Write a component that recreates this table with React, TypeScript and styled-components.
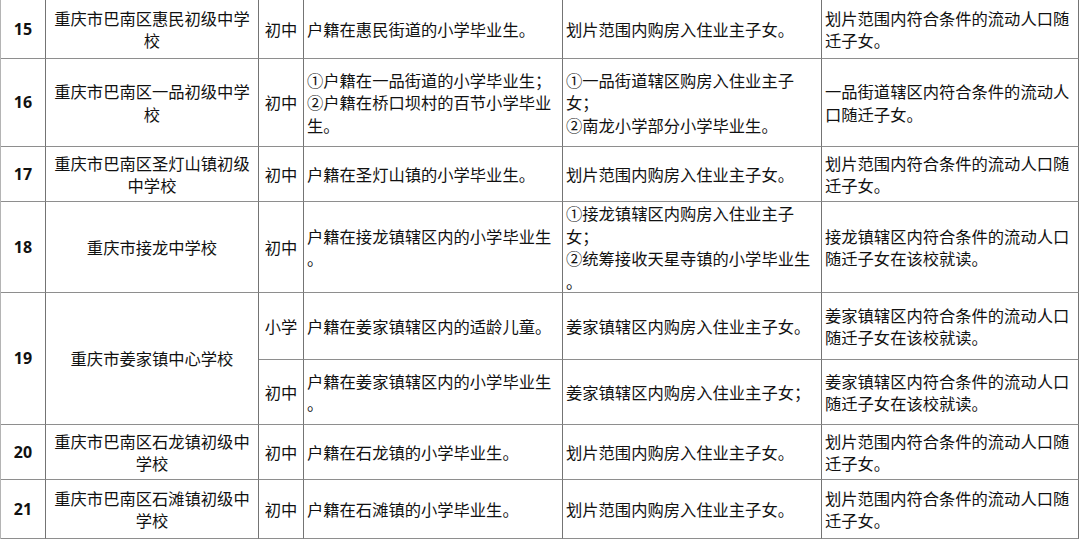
import React from "react";
import styled, { createGlobalStyle } from "styled-components";

const GlobalStyle = createGlobalStyle`
  html, body {
    margin: 0;
    padding: 0;
    background: #ffffff;
  }
`;

type Entry = {
  level: string;
  scope: string[];
  buy: string[];
  flow: string[];
};

type School = {
  no: string;
  name: string[];
  entries: Entry[];
};

const schools: School[] = [
  {
    no: "15",
    name: ["重庆市巴南区惠民初级中学", "校"],
    entries: [
      {
        level: "初中",
        scope: ["户籍在惠民街道的小学毕业生。"],
        buy: ["划片范围内购房入住业主子女。"],
        flow: ["划片范围内符合条件的流动人口随", "迁子女。"],
      },
    ],
  },
  {
    no: "16",
    name: ["重庆市巴南区一品初级中学", "校"],
    entries: [
      {
        level: "初中",
        scope: ["①户籍在一品街道的小学毕业生；", "②户籍在桥口坝村的百节小学毕业", "生。"],
        buy: ["①一品街道辖区购房入住业主子", "女；", "②南龙小学部分小学毕业生。"],
        flow: ["一品街道辖区内符合条件的流动人", "口随迁子女。"],
      },
    ],
  },
  {
    no: "17",
    name: ["重庆市巴南区圣灯山镇初级", "中学校"],
    entries: [
      {
        level: "初中",
        scope: ["户籍在圣灯山镇的小学毕业生。"],
        buy: ["划片范围内购房入住业主子女。"],
        flow: ["划片范围内符合条件的流动人口随", "迁子女。"],
      },
    ],
  },
  {
    no: "18",
    name: ["重庆市接龙中学校"],
    entries: [
      {
        level: "初中",
        scope: ["户籍在接龙镇辖区内的小学毕业生", "。"],
        buy: ["①接龙镇辖区内购房入住业主子", "女；", "②统筹接收天星寺镇的小学毕业生", "。"],
        flow: ["接龙镇辖区内符合条件的流动人口", "随迁子女在该校就读。"],
      },
    ],
  },
  {
    no: "19",
    name: ["重庆市姜家镇中心学校"],
    entries: [
      {
        level: "小学",
        scope: ["户籍在姜家镇辖区内的适龄儿童。"],
        buy: ["姜家镇辖区内购房入住业主子女。"],
        flow: ["姜家镇辖区内符合条件的流动人口", "随迁子女在该校就读。"],
      },
      {
        level: "初中",
        scope: ["户籍在姜家镇辖区内的小学毕业生", "。"],
        buy: ["姜家镇辖区内购房入住业主子女；"],
        flow: ["姜家镇辖区内符合条件的流动人口", "随迁子女在该校就读。"],
      },
    ],
  },
  {
    no: "20",
    name: ["重庆市巴南区石龙镇初级中", "学校"],
    entries: [
      {
        level: "初中",
        scope: ["户籍在石龙镇的小学毕业生。"],
        buy: ["划片范围内购房入住业主子女。"],
        flow: ["划片范围内符合条件的流动人口随", "迁子女。"],
      },
    ],
  },
  {
    no: "21",
    name: ["重庆市巴南区石滩镇初级中", "学校"],
    entries: [
      {
        level: "初中",
        scope: ["户籍在石滩镇的小学毕业生。"],
        buy: ["划片范围内购房入住业主子女。"],
        flow: ["划片范围内符合条件的流动人口随", "迁子女。"],
      },
    ],
  },
];

const Sheet = styled.div`
  display: grid;
  grid-template-columns: 45px 213px 45px 259px 259px 257px;
  grid-template-rows: 59px 88px 55px 91px 67px 65px 55px 59px;
  width: max-content;
  border-left: 1px solid #b4b4b4;
  background: #ffffff;
  color: #111111;
  font-family: "Noto Sans CJK SC", "Noto Sans", sans-serif;
  font-size: 16.3px;
  line-height: 22.5px;
`;

const Cell = styled.div<{ $align?: "center" | "left"; $rows?: number }>`
  box-sizing: border-box;
  display: flex;
  flex-direction: column;
  justify-content: center;
  align-items: ${(p) => (p.$align === "left" ? "flex-start" : "center")};
  padding: 0 ${(p) => (p.$align === "left" ? "3px" : "0")};
  grid-row: span ${(p) => p.$rows ?? 1};
  border-right: 1px solid #747474;
  border-bottom: 1px solid #8e8e8e;
  white-space: nowrap;
`;

const NumberCell = styled(Cell)`
  font-family: "Open Sans", "Noto Sans", sans-serif;
  font-weight: 700;
  font-size: 16px;
`;

const Line = styled.span`
  display: block;
`;

const Lines: React.FC<{ lines: string[] }> = ({ lines }) => (
  <>
    {lines.map((l, i) => (
      <Line key={i}>{l}</Line>
    ))}
  </>
);

const App: React.FC = () => {
  return (
    <>
      <GlobalStyle />
      <Sheet>
        {schools.map((s) => (
          <React.Fragment key={s.no}>
            <NumberCell $rows={s.entries.length}>{s.no}</NumberCell>
            <Cell $rows={s.entries.length}>
              <Lines lines={s.name} />
            </Cell>
            {s.entries.map((e, i) => (
              <React.Fragment key={i}>
                <Cell>{e.level}</Cell>
                <Cell $align="left">
                  <Lines lines={e.scope} />
                </Cell>
                <Cell $align="left">
                  <Lines lines={e.buy} />
                </Cell>
                <Cell $align="left">
                  <Lines lines={e.flow} />
                </Cell>
              </React.Fragment>
            ))}
          </React.Fragment>
        ))}
      </Sheet>
    </>
  );
};

export default App;
